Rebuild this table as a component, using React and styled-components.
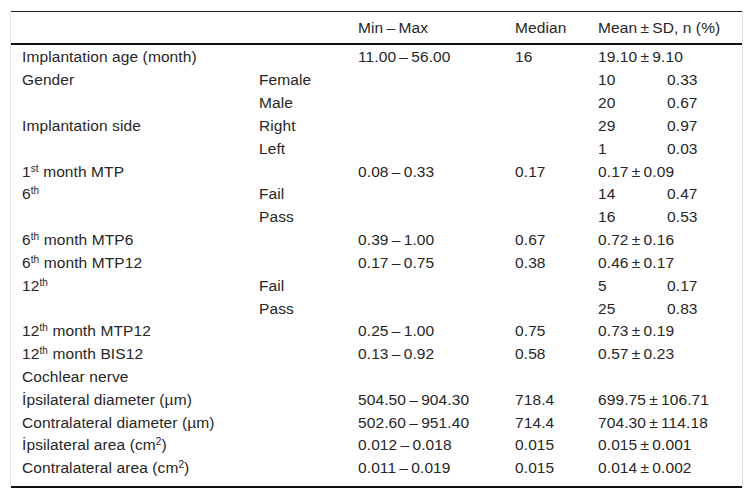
import styled, { createGlobalStyle } from 'styled-components';

const Global = createGlobalStyle`
  body {
    margin: 0;
    background: #fff;
    font-family: "Liberation Sans", Arial, sans-serif;
  }
`;

const Frame = styled.div`
  margin: 11px 10px 0 10px;
  width: 731px;
  border-left: 1px solid #e6e6e6;
  border-right: 1px solid #e6e6e6;
`;

const Table = styled.table`
  width: 100%;
  border-collapse: separate;
  border-spacing: 0;
  table-layout: fixed;
  font-size: 15.5px;
  letter-spacing: 0.1px;
  color: #262626;
  border-top: 1px solid #222;
  border-bottom: 2px solid #111;
  padding-bottom: 6px;
`;

const HeadCell = styled.th`
  text-align: left;
  font-weight: normal;
  padding: 0 0 0 11px;
  height: 31px;
  vertical-align: middle;
  border-bottom: 2px solid #111;
`;

const Cell = styled.td`
  padding: 0 0 0 11px;
  height: 22.83px;
  line-height: 16px;
  vertical-align: middle;
  white-space: nowrap;
`;

const Row = styled.tr`
  &:first-child td {
    padding-top: 1px;
  }
`;

const Sup = styled.sup`
  font-size: 10px;
  line-height: 0;
  vertical-align: 5px;
`;

const t = '\u2009';
const pm = (a, b) => `${a}${t}±${t}${b}`;
const rg = (a, b) => `${a}${t}–${t}${b}`;

const rows = [
  ['Implantation age (month)', '', rg('11.00', '56.00'), '16', pm('19.10', '9.10'), ''],
  ['Gender', 'Female', '', '', '10', '0.33'],
  ['', 'Male', '', '', '20', '0.67'],
  ['Implantation side', 'Right', '', '', '29', '0.97'],
  ['', 'Left', '', '', '1', '0.03'],
  [<>1<Sup>st</Sup> month MTP</>, '', rg('0.08', '0.33'), '0.17', pm('0.17', '0.09'), ''],
  [<>6<Sup>th</Sup></>, 'Fail', '', '', '14', '0.47'],
  ['', 'Pass', '', '', '16', '0.53'],
  [<>6<Sup>th</Sup> month MTP6</>, '', rg('0.39', '1.00'), '0.67', pm('0.72', '0.16'), ''],
  [<>6<Sup>th</Sup> month MTP12</>, '', rg('0.17', '0.75'), '0.38', pm('0.46', '0.17'), ''],
  [<>12<Sup>th</Sup></>, 'Fail', '', '', '5', '0.17'],
  ['', 'Pass', '', '', '25', '0.83'],
  [<>12<Sup>th</Sup> month MTP12</>, '', rg('0.25', '1.00'), '0.75', pm('0.73', '0.19'), ''],
  [<>12<Sup>th</Sup> month BIS12</>, '', rg('0.13', '0.92'), '0.58', pm('0.57', '0.23'), ''],
  ['Cochlear nerve', '', '', '', '', ''],
  ['İpsilateral diameter (µm)', '', rg('504.50', '904.30'), '718.4', pm('699.75', '106.71'), ''],
  ['Contralateral diameter (µm)', '', rg('502.60', '951.40'), '714.4', pm('704.30', '114.18'), ''],
  [<>İpsilateral area (cm<Sup>2</Sup>)</>, '', rg('0.012', '0.018'), '0.015', pm('0.015', '0.001'), ''],
  [<>Contralateral area (cm<Sup>2</Sup>)</>, '', rg('0.011', '0.019'), '0.015', pm('0.014', '0.002'), ''],
];

export default function App() {
  return (
    <>
      <Global />
      <Frame>
        <Table>
          <colgroup>
            <col style={{ width: 237 }} />
            <col style={{ width: 99 }} />
            <col style={{ width: 157 }} />
            <col style={{ width: 83 }} />
            <col style={{ width: 69 }} />
            <col style={{ width: 86 }} />
          </colgroup>
          <thead>
            <tr>
              <HeadCell />
              <HeadCell />
              <HeadCell>{rg('Min', 'Max')}</HeadCell>
              <HeadCell>Median</HeadCell>
              <HeadCell colSpan={2}>Mean{t}±{t}SD, n (%)</HeadCell>
            </tr>
          </thead>
          <tbody>
            {rows.map((r, i) => (
              <Row key={i}>
                {r.map((c, j) => (
                  <Cell key={j}>{c}</Cell>
                ))}
              </Row>
            ))}
          </tbody>
        </Table>
      </Frame>
    </>
  );
}
